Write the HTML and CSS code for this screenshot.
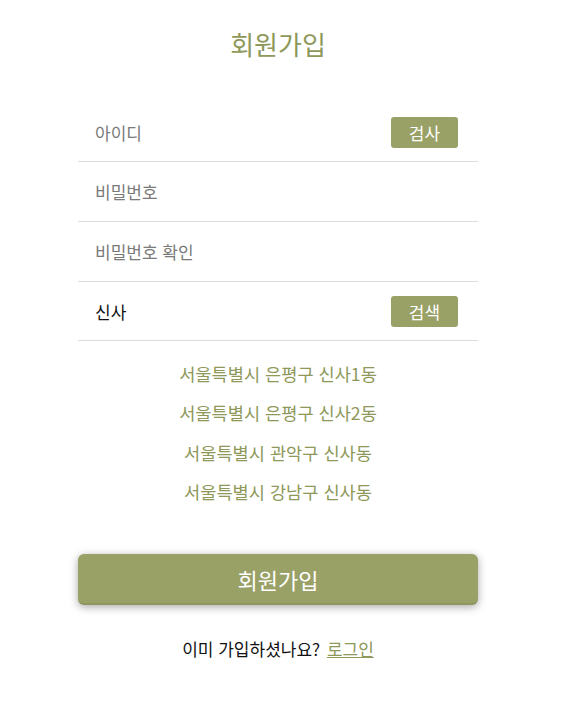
FILE: index.html
```html
<!DOCTYPE html>
<html lang="ko">
<head>
<meta charset="utf-8">
<title>회원가입</title>
<link rel="stylesheet" href="styles.css">
</head>
<body>
<main class="page">
  <h1 class="title">회원가입</h1>
  <form class="form">
    <div class="row">
      <input class="field" type="text" placeholder="아이디">
      <button type="button" class="small-btn">검사</button>
    </div>
    <div class="row">
      <input class="field" type="password" placeholder="비밀번호">
    </div>
    <div class="row">
      <input class="field" type="password" placeholder="비밀번호 확인">
    </div>
    <div class="row">
      <input class="field" type="text" value="신사">
      <button type="button" class="small-btn">검색</button>
    </div>
    <ul class="results">
      <li>서울특별시 은평구 신사1동</li>
      <li>서울특별시 은평구 신사2동</li>
      <li>서울특별시 관악구 신사동</li>
      <li>서울특별시 강남구 신사동</li>
    </ul>
    <button type="button" class="submit">회원가입</button>
  </form>
  <p class="login">이미 가입하셨나요? <a href="#" class="login-link">로그인</a></p>
</main>
</body>
</html>
```

FILE: styles.css
```css
* { box-sizing: border-box; }
html, body { margin: 0; padding: 0; background: #fff; }
body {
  font-family: "Noto Sans CJK KR", "Noto Sans", sans-serif;
  color: #111;
  padding-right: 12px;
}
.page {
  width: 400px;
  margin: 0 auto;
  padding-top: 25px;
  display: flex;
  flex-direction: column;
  align-items: stretch;
}
.title {
  margin: 0;
  text-align: center;
  font-size: 26px;
  font-weight: 400;
  color: #8e9859;
  line-height: 38px;
}
.form {
  margin-top: 40px;
  display: flex;
  flex-direction: column;
}
.row {
  height: 60px;
  border-bottom: 1px solid #dcdcdc;
  display: flex;
  align-items: center;
  padding: 0 20px 0 17px;
}
.row:first-child { height: 59px; }
.row:last-of-type { height: 59px; }
.field {
  flex: 1;
  border: none;
  outline: none;
  background: transparent;
  font-family: inherit;
  font-size: 17px;
  color: #111;
  padding: 0;
  height: 30px;
}
.field::placeholder { color: #7a7a7a; }
.small-btn {
  width: 67px;
  height: 31px;
  border: none;
  border-radius: 3px;
  background: #99a167;
  color: #fff;
  font-family: inherit;
  font-size: 17px;
  padding: 0;
}
.results {
  list-style: none;
  margin: 13px 0 0;
  padding: 0;
  text-align: center;
  color: #8e9859;
  font-size: 17.6px;
}
.results li {
  line-height: 39.3px;
}
.submit {
  margin-top: 43px;
  height: 51px;
  border: none;
  border-radius: 6px;
  background: #99a167;
  color: #fff;
  font-family: inherit;
  font-size: 22px;
  box-shadow: 0 2px 8px rgba(0,0,0,0.35);
  border-bottom: 2px solid #8f9660;
}
.login {
  margin: 31px 0 0;
  text-align: center;
  font-size: 17px;
  color: #111;
  line-height: 26px;
}
.login-link {
  color: #8e9859;
  text-decoration: underline;
  margin-left: 2px;
}
```
